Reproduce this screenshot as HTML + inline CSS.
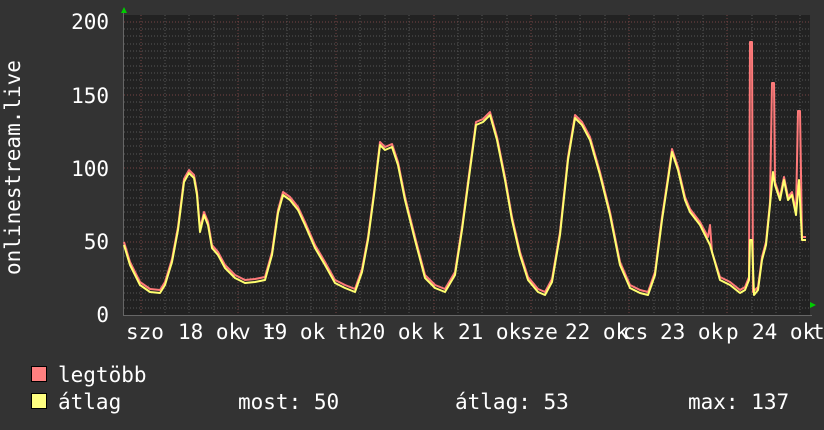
<!DOCTYPE html>
<html><head><meta charset="utf-8"><style>
html,body{margin:0;padding:0;background:#333;width:824px;height:430px;overflow:hidden}
svg{display:block}
text{font-family:"DejaVu Sans Mono","Liberation Mono",monospace;fill:#fff}
</style></head><body>
<svg width="824" height="430" viewBox="0 0 824 430">
<rect width="824" height="430" fill="#333"/>
<rect x="124" y="15" width="686" height="301" fill="#222"/>
<g stroke="#555" stroke-width="1" stroke-dasharray="1,2">
<path d="M124 29H810M124 36H810M124 44H810M124 51H810M124 58H810M124 66H810M124 73H810M124 80H810M124 88H810M124 102H810M124 110H810M124 117H810M124 124H810M124 132H810M124 139H810M124 146H810M124 154H810M124 161H810M124 176H810M124 183H810M124 190H810M124 198H810M124 205H810M124 212H810M124 220H810M124 227H810M124 234H810M124 249H810M124 256H810M124 264H810M124 271H810M124 278H810M124 286H810M124 293H810M124 300H810M124 308H810"/>
<path d="M165 15V316M189 15V316M214 15V316M263 15V316M287 15V316M311 15V316M360 15V316M385 15V316M409 15V316M458 15V316M482 15V316M507 15V316M556 15V316M580 15V316M605 15V316M654 15V316M678 15V316M703 15V316M752 15V316M776 15V316M800 15V316"/>
</g>
<g stroke="#744" stroke-width="1" stroke-dasharray="1,2">
<path d="M124 22H810M124 95H810M124 168H810M124 242H810"/>
<path d="M141 15V316M238 15V316M336 15V316M434 15V316M531 15V316M629 15V316M727 15V316"/>
</g>
<path d="M124 315.5H812M123.5 12V316" stroke="#666" stroke-width="1"/>
<polygon points="121,13 124,7 127,13" fill="#0c0"/>
<polygon points="810,302 816,305 810,308" fill="#0c0"/>
<g fill="none" stroke-width="2" stroke-linejoin="round">
<polyline stroke="#ff7a7a" transform="translate(0,-3)" points="124,245 130,265 140,285 150,292 160,293 165,285 172,262 178,230 184,182 189,173 194,178 197,195 200,232 204,215 208,225 212,248 218,255 225,268 235,278 245,283 255,282 265,280 272,255 278,213 283,195 290,200 298,210 305,225 315,248 325,265 335,283 345,288 355,292 362,272 368,240 374,195 380,145 385,150 392,147 398,165 405,200 415,240 425,278 435,288 445,292 455,275 462,230 468,185 476,125 483,122 490,115 497,140 505,180 512,220 520,255 528,280 538,292 545,295 552,282 560,235 568,160 575,118 582,125 590,140 600,175 610,215 620,265 630,288 640,293 648,295 655,275 662,220 668,180 672,152 678,170 685,200 690,212 700,225 708,240 710,228 712,255 720,280 730,285 740,293 745,290 749,280 750,45 752,45 753,295 758,290 762,260 766,245 770,205 772,86 774,86 775,185 780,200 784,180 788,200 792,195 796,215 798,114 800,114 802,240 806,240"/>
<polyline stroke="#ffff70" points="124,245 130,265 140,285 150,292 160,293 165,285 172,262 178,230 184,182 189,173 194,178 197,195 200,232 204,215 208,225 212,248 218,255 225,268 235,278 245,283 255,282 265,280 272,255 278,213 283,195 290,200 298,210 305,225 315,248 325,265 335,283 345,288 355,292 362,272 368,240 374,195 380,145 385,150 392,147 398,165 405,200 415,240 425,278 435,288 445,292 455,275 462,230 468,185 476,125 483,122 490,115 497,140 505,180 512,220 520,255 528,280 538,292 545,295 552,282 560,235 568,160 575,118 582,125 590,140 600,175 610,215 620,265 630,288 640,293 648,295 655,275 662,220 668,180 672,152 678,170 685,200 690,212 700,225 710,245 720,280 730,285 740,293 745,290 749,280 750,240 752,240 754,295 758,290 762,260 766,245 770,205 773,172 775,185 780,200 784,180 788,200 792,195 796,215 799,180 802,240 806,240"/>
</g>
<g font-size="21" text-anchor="end">
<text x="109" y="29">200</text>
<text x="109" y="103">150</text>
<text x="109" y="176">100</text>
<text x="109" y="249">50</text>
<text x="109" y="322">0</text>
</g>
<text font-size="21" transform="translate(20,275) rotate(-90)">onlinestream.live</text>
<g font-size="21">
<text x="126" y="339">szo</text><text x="178" y="339">18 ok</text>
<text x="238" y="339">v t</text><text x="262" y="339">19 ok</text>
<text x="336" y="339">th</text><text x="360" y="339">20 ok</text>
<text x="432" y="339">k</text><text x="458" y="339">21 ok</text>
<text x="520" y="339">sze</text><text x="565" y="339">22 ok</text>
<text x="623" y="339">cs</text><text x="660" y="339">23 ok</text>
<text x="726" y="339">p</text><text x="752" y="339">24 ok</text><text x="812" y="339">t</text>
</g>
<rect x="31.5" y="366.5" width="15" height="15" fill="#ff8080" stroke="#000"/>
<rect x="31.5" y="393.5" width="15" height="15" fill="#ffff80" stroke="#000"/>
<g font-size="21">
<text x="58" y="382">legtöbb</text>
<text x="58" y="409">átlag</text>
<text x="238" y="409">most: 50</text>
<text x="455" y="409">átlag: 53</text>
<text x="688" y="409">max: 137</text>
</g>
</svg>
</body></html>
